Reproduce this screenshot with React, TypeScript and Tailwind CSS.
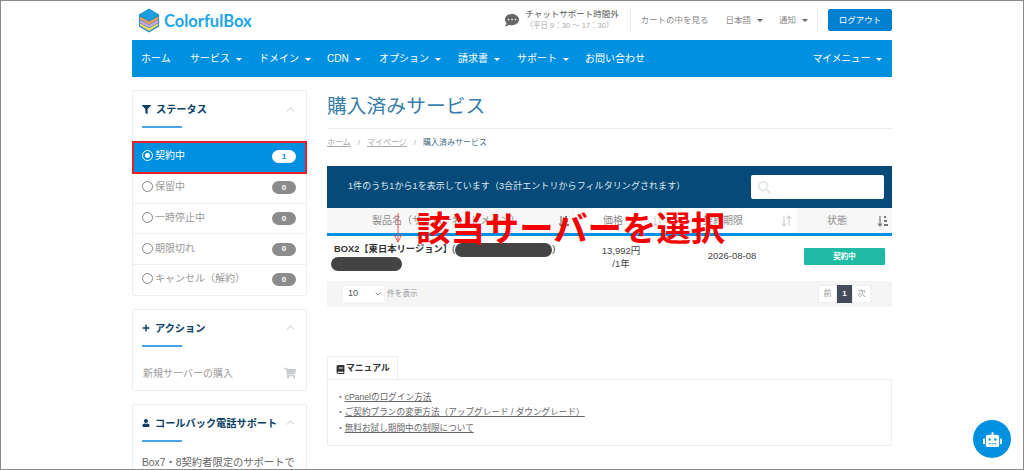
import type { ReactNode } from "react";
import {
  FaBook,
  FaCommentDots,
  FaFilter,
  FaPlus,
  FaRobot,
  FaSearch,
  FaShoppingCart,
  FaUser,
} from "react-icons/fa";
import { ChevronDown, ChevronUp } from "lucide-react";

const navLeft = [
  { label: "ホーム", caret: false, w: "w-[49px]" },
  { label: "サービス", caret: true, w: "w-[69px]" },
  { label: "ドメイン", caret: true, w: "w-[68px]" },
  { label: "CDN", caret: true, w: "w-[52px]" },
  { label: "オプション", caret: true, w: "w-[79px]" },
  { label: "請求書", caret: true, w: "w-[59px]" },
  { label: "サポート", caret: true, w: "w-[68px]" },
  { label: "お問い合わせ", caret: false, w: "w-[60px]" },
];

const statuses = [
  { label: "保留中", count: 0 },
  { label: "一時停止中", count: 0 },
  { label: "期限切れ", count: 0 },
  { label: "キャンセル（解約）", count: 0 },
];

function Caret({ className }: { className: string }) {
  return (
    <span
      className={`ml-[6px] inline-block h-0 w-0 border-x-[3px] border-t-[3px] border-x-transparent align-middle ${className}`}
    />
  );
}

function Logo() {
  return (
    <svg width="22" height="25" viewBox="0 0 24 26">
      <path d="M12 0 23 6.500V19.500L12 26 1 19.500V6.500Z" fill="#1f8ecb" />
      <path d="M12 1 22 7 12 12.500 2 7Z" fill="#1b9fe0" />
      <path d="M2 8.500 12 14 22 8.500V12L12 17.500 2 12Z" fill="#e39a5c" />
      <path d="M2 12.500 12 18 22 12.500V15.500L12 21 2 15.500Z" fill="#c9a6e0" />
      <path d="M2 16 12 21.500 22 16V18.500L12 24.500 2 18.500Z" fill="#f2dc5a" />
    </svg>
  );
}

function Card({
  icon,
  title,
  children,
  className,
}: {
  icon: ReactNode;
  title: string;
  children: ReactNode;
  className: string;
}) {
  return (
    <section className={`rounded-[2px] border border-[#e9eff3] bg-white pt-[7px] ${className}`}>
      <div className="flex h-[22px] items-center justify-between pr-[9px] pl-[9px]">
        <h3 className="flex items-center gap-[5px] pt-[1px] text-[10.200px] font-bold whitespace-nowrap text-[#0b3f63]">
          {icon}
          {title}
        </h3>
        <ChevronUp size={13} className="text-[#d5d9dc]" />
      </div>
      <div className="mt-[6px] ml-[9px] h-[2px] w-[40px] bg-[#4aa3ea]" />
      {children}
    </section>
  );
}

function StatusRow({ label, count }: { label: string; count: number }) {
  return (
    <div className="flex h-[30.700px] items-center justify-between border-t border-[#edf1f4] pr-[10px] pl-[9px]">
      <span className="flex items-center gap-[2px] pb-[2px] text-[10px] text-[#999]">
        <span className="h-[11px] w-[11px] rounded-full border border-[#888]" />
        {label}
      </span>
      <span className="flex h-[13px] w-[24px] items-center justify-center rounded-full bg-[#8c8c8c] text-[8px] font-bold text-white">
        {count}
      </span>
    </div>
  );
}

function SortIcon({ dark }: { dark?: boolean }) {
  const color = dark ? "#777" : "#d0d0d0";
  return (
    <svg width="11" height="12" viewBox="0 0 11 12" fill="none" stroke={color} strokeWidth="1.200">
      <path d="M3 1V11M1 8.500 3 11 5 8.500" />
      {dark ? (
        <path d="M7 2H9M7 6H10M7 10H11" strokeWidth="1.800" />
      ) : (
        <path d="M8 11V1M6 3.500 8 1 10 3.500" />
      )}
    </svg>
  );
}

function Redacted({ className }: { className: string }) {
  return <span className={`inline-block h-[14px] rounded-full bg-[#444] align-middle ${className}`} />;
}

function Sidebar() {
  return (
    <aside className="w-[175px] shrink-0">
      <Card icon={<FaFilter size={9} className="text-[#0b3f63]" />} title="ステータス" className="">
        <div className="mt-[13px] flex h-[31px] items-center justify-between bg-[#0090e0] pr-[10px] pl-[9px]">
          <span className="flex items-center gap-[2px] pb-[2px] text-[10px] text-white">
            <span className="flex h-[11px] w-[11px] items-center justify-center rounded-full border border-white">
              <span className="h-[5px] w-[5px] rounded-full bg-white" />
            </span>
            契約中
          </span>
          <span className="flex h-[13px] w-[24px] items-center justify-center rounded-full bg-white text-[8px] font-bold text-[#0090e0]">
            1
          </span>
        </div>
        {statuses.map((status) => (
          <StatusRow key={status.label} label={status.label} count={status.count} />
        ))}
      </Card>

      <Card
        className="mt-[13px] h-[82px]"
        icon={<FaPlus size={8} className="text-[#0b3f63]" />}
        title="アクション"
      >
        <div className="mt-[19px] flex items-center justify-between pr-[10px] pl-[10px] text-[10px] text-[#999]">
          新規サーバーの購入
          <FaShoppingCart size={12} className="text-[#c8ccce]" />
        </div>
      </Card>

      <Card
        className="mt-[13px]"
        icon={<FaUser size={8} className="text-[#0b3f63]" />}
        title="コールバック電話サポート"
      >
        <p className="mt-[13px] pl-[9px] text-[10.300px] whitespace-nowrap text-[#666]">
          Box7・8契約者限定のサポートで
        </p>
      </Card>
    </aside>
  );
}

function ServiceTable() {
  return (
    <div className="mt-[18px]">
      <div className="flex h-[42px] items-center justify-between bg-[#064a7a] pr-[8px] pl-[21px]">
        <span className="text-[9px] tracking-[0.07px] text-[#dfe9f0]">
          1件のうち1から1を表示しています（3合計エントリからフィルタリングされます）
        </span>
        <div className="flex h-[24px] w-[133px] items-center rounded-[2px] bg-white pl-[7px]">
          <FaSearch size={13} className="text-[#e4e8ea]" />
        </div>
      </div>

      <div className="grid h-[25px] grid-cols-[248px_92px_130px_95px] items-center text-[10px] text-[#8c8c8c]">
        <div className="flex h-full items-center justify-between bg-[#f7f7f7] pr-[6px] pl-[45px]">
          製品名（サーバー名 / ドメイン）
          <SortIcon dark />
        </div>
        <div className="flex h-full items-center justify-between pr-[4px] pl-[28px]">
          価格
          <SortIcon />
        </div>
        <div className="flex h-full items-center justify-between pr-[5px] pl-[36px]">
          契約期限
          <SortIcon />
        </div>
        <div className="flex h-full items-center justify-between bg-[#f7f7f7] pr-[4px] pl-[30px]">
          状態
          <SortIcon dark />
        </div>
      </div>
      <div className="h-[3px] bg-[#0090e0]" />

      <div className="grid h-[45px] grid-cols-[248px_92px_130px_95px] items-center pb-[4px] text-[#444]">
        <div className="pl-[4px] text-[9.300px] leading-[13px] font-bold text-[#333]">
          <span className="pl-[3px]">BOX2【東日本リージョン】</span>
          <span className="font-normal">(</span>
          <Redacted className="w-[97px]" />
          <span className="font-normal">)</span>
          <br />
          <Redacted className="w-[71px]" />
        </div>
        <div className="text-center text-[9.500px] leading-[13px]">
          13,992円
          <br />
          /1年
        </div>
        <div className="text-center text-[9.500px]">2026-08-08</div>
        <div className="flex justify-center">
          <span className="flex h-[17px] w-[81px] items-center justify-center rounded-[1px] bg-[#1fbba6] text-[7.500px] font-bold text-white">
            契約中
          </span>
        </div>
      </div>

      <div className="flex h-[26px] items-center justify-between bg-[#f5f5f5] pr-[21px] pl-[16px] text-[7.700px] text-[#999]">
        <div className="flex items-center gap-[3px]">
          <span className="flex h-[16px] w-[41px] items-center justify-between bg-white pr-[2px] pl-[5px] text-[9px] text-[#555]">
            10
            <ChevronDown size={8} className="text-[#555]" />
          </span>
          件を表示
        </div>
        <div className="flex h-[18px] items-stretch text-[8px]">
          <span className="flex w-[19px] items-center justify-center border border-[#eee] bg-white">前</span>
          <span className="flex w-[15px] items-center justify-center bg-[#444b59] font-bold text-white">1</span>
          <span className="flex w-[19px] items-center justify-center border border-[#eee] bg-white">次</span>
        </div>
      </div>
    </div>
  );
}

function Manual() {
  return (
    <div className="mt-[49px]">
      <div className="flex h-[23px] w-[71px] items-center gap-[1px] rounded-t-[2px] border border-b-0 border-[#e9eff3] pt-[2px] pl-[8px] text-[8.800px] font-bold text-[#333]">
        <FaBook size={9} />
        マニュアル
      </div>
      <div className="flex h-[67px] flex-col justify-center gap-[3px] rounded-b-[2px] border border-[#e9eff3] pl-[8px] text-[8.640px] leading-[12.500px] text-[#666]">
        <p>
          ・<span className="underline">cPanelのログイン方法</span>
        </p>
        <p>
          ・<span className="underline">ご契約プランの変更方法（アップグレード / ダウングレード）</span>
        </p>
        <p>
          ・<span className="underline">無料お試し期間中の制限について</span>
        </p>
      </div>
    </div>
  );
}

export default function App() {
  return (
    <div className="relative h-[470px] w-[1024px] overflow-hidden border-x border-y border-[#8a8a8a] bg-white font-['Liberation_Sans','Noto_Sans_CJK_JP',sans-serif]">
      <div className="mx-auto w-[760px]">
        <header className="flex h-[39px] items-center justify-between pb-[1px]">
          <div className="flex items-center gap-[4px] pl-[6px]">
            <Logo />
            <span className="mt-[2px] font-['Lato',sans-serif] text-[16.500px] font-bold text-[#1ba5ea]">
              ColorfulBox
            </span>
          </div>
          <div className="flex items-center">
            <FaCommentDots size={14} className="text-[#666]" />
            <div className="ml-[6px] w-[105px] leading-[11px]">
              <p className="text-[8.500px] text-[#555]">チャットサポート時間外</p>
              <p className="text-[7.500px] text-[#aaa]">（平日 9：30 ～ 17：30）</p>
            </div>
            <div className="flex h-[24px] items-center border-l border-[#eee] pl-[9px] text-[8.500px] text-[#888]">
              カートの中を見る
            </div>
            <span className="ml-[17px] text-[8.500px] text-[#888]">
              日本語
              <Caret className="border-t-[#666]" />
            </span>
            <span className="ml-[16px] text-[8.500px] text-[#888]">
              通知
              <Caret className="border-t-[#666]" />
            </span>
            <div className="ml-[9px] h-[24px] border-l border-[#eee]" />
            <button className="ml-[10px] h-[22px] w-[64px] rounded-[2px] bg-[#0081d0] text-[8.500px] text-white">
              ログアウト
            </button>
          </div>
        </header>

        <nav className="flex h-[37px] items-center justify-between bg-[#0090e0] pr-[10px] pl-[9px] text-[10px] text-white">
          <div className="flex items-center">
            {navLeft.map((item) => (
              <span key={item.label} className={`${item.w} whitespace-nowrap`}>
                {item.label}
                {item.caret && <Caret className="border-t-white" />}
              </span>
            ))}
          </div>
          <span className="tracking-[-0.4px]">
            マイメニュー
            <Caret className="border-t-white" />
          </span>
        </nav>

        <main className="mt-[13px] flex gap-[20px]">
          <Sidebar />
          <div className="w-[565px]">
            <h1 className="mt-[2px] text-[19.800px] leading-[28px] text-[#3a7fa8]">購入済みサービス</h1>
            <div className="mt-[8px] h-px bg-[#e8eef1]" />
            <div className="mt-[9px] flex h-[10px] items-center text-[8px] text-[#aaa]">
              <span className="underline">ホーム</span>
              <span className="mx-[7px]">/</span>
              <span className="underline">マイページ</span>
              <span className="mx-[7px]">/</span>
              <span className="text-[#476a80]">購入済みサービス</span>
            </div>
            <ServiceTable />
            <Manual />
          </div>
        </main>
      </div>

      {/* annotations over the screenshot */}
      <div className="absolute top-[140px] left-[131px] h-[33px] w-[175px] border-2 border-[#e8202a]" />
      <div className="absolute top-[206px] left-[415px] text-[34.400px] leading-[44px] font-bold whitespace-nowrap text-[#f50000]">
        該当サーバーを選択
      </div>
      <svg className="absolute top-[212px] left-[391px]" width="12" height="30" viewBox="0 0 12 30">
        <path d="M6 0V29M2 21 6 29 10 21" fill="none" stroke="#f05050" strokeWidth="1" />
      </svg>

      <div className="absolute top-[419px] left-[972px] flex h-[38px] w-[38px] items-center justify-center rounded-full bg-[#0090e0]">
        <FaRobot size={19} className="text-white" />
      </div>
    </div>
  );
}
